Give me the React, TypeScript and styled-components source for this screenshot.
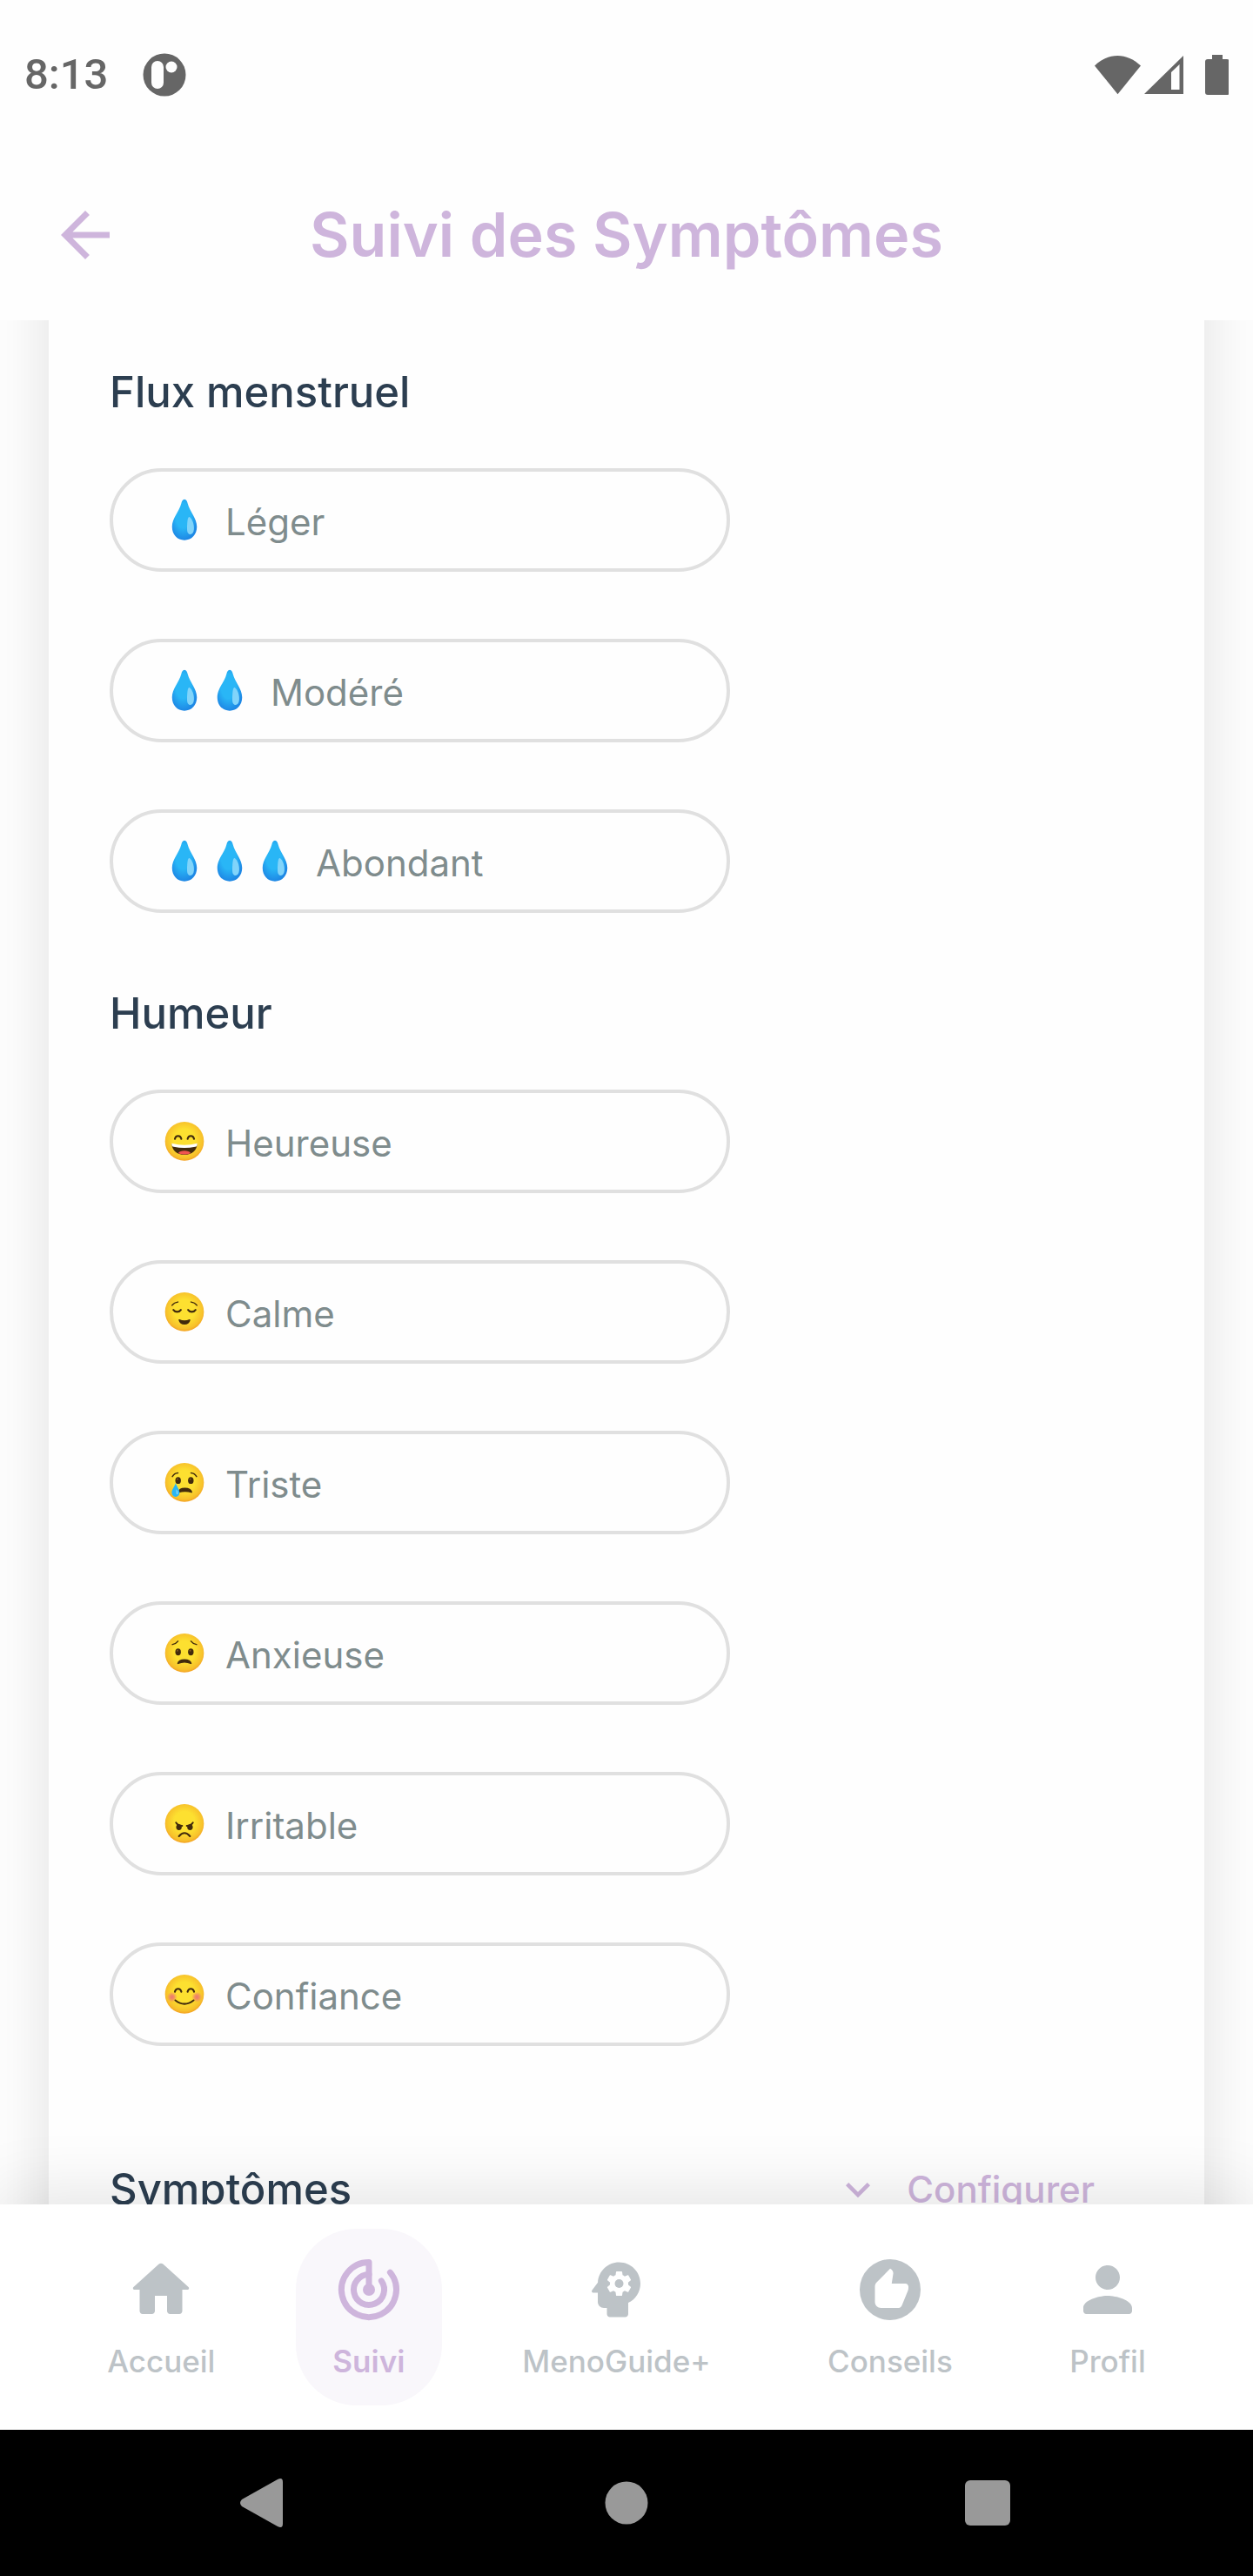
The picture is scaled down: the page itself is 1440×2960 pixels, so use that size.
import React from 'react';
import styled, { createGlobalStyle } from 'styled-components';

const color = {
  surface: '#fefefe',
  lilac: '#ceb5dc',
  ink: '#2c3e50',
  muted: '#7f8c8d',
  inactive: '#bdc3c7',
  outline: '#e0e0e0',
  status: '#666666',
};

const GlobalStyle = createGlobalStyle`
  *, *::before, *::after { box-sizing: border-box; }
  body { margin: 0; background: ${color.surface}; }
  button { font: inherit; color: inherit; background: none; border: 0; padding: 0; cursor: pointer; }
  h1, h2 { margin: 0; }
  svg { display: block; flex: none; }
`;

const Screen = styled.div`
  display: flex;
  flex-direction: column;
  height: 100vh;
  background: ${color.surface};
  font-family: Inter, Roboto, sans-serif;
  font-optical-sizing: none;
`;

const StatusBar = styled.div`
  display: flex;
  align-items: center;
  justify-content: space-between;
  height: 172px;
  padding: 0 28px;
  color: ${color.status};
`;

const StatusGroup = styled.div`
  display: flex;
  align-items: center;
  gap: 40px;
`;

const Clock = styled.time`
  font: 500 49px/58px Roboto, sans-serif;
`;

const Header = styled.header`
  display: grid;
  grid-template-columns: 84px 1fr 84px;
  align-items: center;
  height: 196px;
  padding: 0 56px;
  color: ${color.lilac};
`;

const Title = styled.h1`
  font-size: 70px;
  line-height: 84px;
  font-weight: 600;
  text-align: center;
`;

const Content = styled.main`
  flex: 1;
  min-height: 0;
  overflow: hidden;
`;

const Card = styled.div`
  margin: -140px 56px;
  padding: 190px 70px 140px;
  background: ${color.surface};
  box-shadow: 0 0 70px rgba(0, 0, 0, 0.12);
`;

const Section = styled.section<{ $before: number }>`
  margin-top: ${(p) => p.$before}px;
`;

const SectionHead = styled.div`
  display: flex;
  align-items: center;
  justify-content: space-between;
  margin-bottom: 54px;
`;

const SectionTitle = styled.h2`
  font-size: 49px;
  line-height: 66px;
  font-weight: 500;
  color: ${color.ink};
`;

const Options = styled.div`
  display: flex;
  flex-direction: column;
  gap: 77px;
`;

const Pill = styled.button`
  display: flex;
  align-items: center;
  width: 60%;
  height: 119px;
  padding: 4px 56px 0;
  border: 4px solid ${color.outline};
  border-radius: 60px;
  color: ${color.muted};
  font-size: 42px;
  line-height: 52px;
`;

const EmojiCell = styled.span`
  display: flex;
  justify-content: center;
  width: 52px;
`;

const PillLabel = styled.span`
  margin-left: 21px;
`;

const Configure = styled.button`
  display: flex;
  align-items: center;
  gap: 28px;
  padding: 0 56px;
  color: ${color.lilac};
  font-size: 42px;
  line-height: 52px;
  font-weight: 500;
`;

const TabBar = styled.nav`
  position: relative;
  display: flex;
  justify-content: space-around;
  padding: 28px 56px;
  background: #ffffff;
  box-shadow: 0 -14px 70px rgba(0, 0, 0, 0.1);
`;

const Tab = styled.a<{ $active: boolean }>`
  display: flex;
  flex-direction: column;
  align-items: center;
  gap: 18px;
  padding: 28px 42px;
  border-radius: 70px;
  background: ${(p) => (p.$active ? '#f9f7fb' : 'transparent')};
  color: ${(p) => (p.$active ? color.lilac : color.inactive)};
  font-size: 35px;
  line-height: 45px;
  font-weight: ${(p) => (p.$active ? 600 : 500)};
  text-decoration: none;
`;

const SystemBar = styled.div`
  position: relative;
  display: flex;
  align-items: center;
  justify-content: space-between;
  height: 168px;
  padding: 0 270px;
  background: #000000;
  color: #999999;
`;

const SharedDefs = styled.svg`
  position: absolute;
  width: 0;
  height: 0;
`;

type IconProps = { size: number; children: React.ReactNode };

function Icon({ size, children }: IconProps) {
  return (
    <svg width={size} height={size} viewBox="0 0 24 24" fill="currentColor" aria-hidden="true">
      {children}
    </svg>
  );
}

const brown = '#422b0d';

type Mood = 'happy' | 'calm' | 'sad' | 'anxious' | 'angry' | 'confident';

const roundEyes = (y: number) => (
  <g fill={brown}>
    <ellipse cx="44.5" cy={y} rx="8.5" ry="10.5" />
    <ellipse cx="83.5" cy={y} rx="8.5" ry="10.5" />
    <circle cx="42.5" cy={y - 4} r="2.4" fill="#896024" />
    <circle cx="81.5" cy={y - 4} r="2.4" fill="#896024" />
  </g>
);

const archedEyes = (
  <g fill="none" stroke={brown} strokeWidth="5.5" strokeLinecap="round">
    <path d="M34.5 57C37 44.5 52 44.5 54.5 57" />
    <path d="M73.5 57C76 44.5 91 44.5 93.5 57" />
  </g>
);

const features: Record<Mood, React.ReactNode> = {
  happy: (
    <>
      {archedEyes}
      <path d="M25 72q39 12 78 0c-1 20-16 33-39 33S26 92 25 72z" fill={brown} />
      <path d="M25 70q39 11 78 0v4c0 4-2 6-6 7q-33 7-66 0c-4-1-6-3-6-7z" fill="#ffffff" />
      <path d="M45 100c5-9 33-9 38 0-10 6-28 6-38 0z" fill="#ef5350" />
    </>
  ),
  calm: (
    <g fill="none" stroke={brown} strokeLinecap="round">
      <path d="M26 44Q33 35 44 34M102 44Q95 35 84 34" strokeWidth="4" />
      <path d="M30 58C35 66 48 66 53 58M75 58c5 8 18 8 23 0" strokeWidth="5.5" />
      <path d="M48 89q16 7 32 0c-4 16-28 16-32 0z" fill={brown} strokeWidth="4" strokeLinejoin="round" />
    </g>
  ),
  sad: (
    <>
      <path d="M27 46Q33 36 44 35M101 46Q95 36 84 35" fill="none" stroke={brown} strokeWidth="4" strokeLinecap="round" />
      {roundEyes(58)}
      <path d="M46 94c2-16 36-16 40 0q-20-6-40 0z" fill={brown} stroke={brown} strokeWidth="4" strokeLinejoin="round" />
      <path d="M37 66c5 13 12 20 12 29 0 8-5 13-12 13s-12-5-12-13c0-9 7-16 12-29z" fill="#29b6f6" />
      <path d="M38 85c4 3 7 7 6 14-1 3-5 2-5-2 0-5 0-8-1-12z" fill="#81d4fa" />
    </>
  ),
  anxious: (
    <>
      <path d="M27 38Q38 36 44 28M101 38Q90 36 84 28" fill="none" stroke={brown} strokeWidth="4" strokeLinecap="round" />
      {roundEyes(61)}
      <path d="M44 96c3-15 37-15 40 0q-20-9-40 0z" fill={brown} stroke={brown} strokeWidth="4" strokeLinejoin="round" />
    </>
  ),
  angry: (
    <>
      <ellipse cx="47" cy="75" rx="8.5" ry="9" fill={brown} />
      <ellipse cx="81" cy="75" rx="8.5" ry="9" fill={brown} />
      <path d="M38 61q5 9 19 10M90 61q-5 9-19 10" fill="none" stroke={brown} strokeWidth="5" strokeLinecap="round" />
      <path d="M47 103q17-20 34 0" fill="none" stroke={brown} strokeWidth="5.5" strokeLinecap="round" />
    </>
  ),
  confident: (
    <>
      <circle cx="26" cy="73" r="16" fill="url(#blush)" />
      <circle cx="102" cy="73" r="16" fill="url(#blush)" />
      {archedEyes}
      <path d="M36 83q28 22 56 0" fill="none" stroke={brown} strokeWidth="5.5" strokeLinecap="round" />
    </>
  ),
};

function Face({ mood }: { mood: Mood }) {
  return (
    <EmojiCell>
      <svg width="48" height="48" viewBox="0 7 128 128" overflow="visible" aria-hidden="true">
        <circle cx="64" cy="64" r="59.5" fill="url(#skin)" />
        {features[mood]}
      </svg>
    </EmojiCell>
  );
}

function Drop() {
  return (
    <EmojiCell>
      <svg width="48" height="48" viewBox="0 7 128 128" overflow="visible" aria-hidden="true">
        <path d="M64 1c6 0 8 6 10 13 6 24 28 45 28 71 0 24-16 41-38 41S26 109 26 85c0-26 22-47 28-71 2-7 4-13 10-13z" fill="url(#water)" />
        <path d="M79 55c9 6 15 22 14 38-1 10-5 15-11 15-7 0-10-7-10-16 0-15 1-40 7-37z" fill="#81d4fa" />
      </svg>
    </EmojiCell>
  );
}

function Gradients() {
  return (
    <SharedDefs aria-hidden="true">
      <defs>
        <radialGradient id="skin" cx="0.5" cy="0.46" r="0.54">
          <stop offset="0.5" stopColor="#fde030" />
          <stop offset="0.88" stopColor="#f7c02b" />
          <stop offset="1" stopColor="#f4a223" />
        </radialGradient>
        <radialGradient id="blush">
          <stop offset="0" stopColor="#ed7770" />
          <stop offset="0.4" stopColor="#ed7770" stopOpacity="0.75" />
          <stop offset="1" stopColor="#ed7770" stopOpacity="0" />
        </radialGradient>
        <radialGradient id="water" cx="0.45" cy="0.4" r="0.6">
          <stop offset="0.5" stopColor="#29b6f6" />
          <stop offset="1" stopColor="#1e88e5" />
        </radialGradient>
      </defs>
    </SharedDefs>
  );
}

const flows = [
  { label: 'Léger', drops: 1 },
  { label: 'Modéré', drops: 2 },
  { label: 'Abondant', drops: 3 },
];

const moods: { label: string; mood: Mood }[] = [
  { label: 'Heureuse', mood: 'happy' },
  { label: 'Calme', mood: 'calm' },
  { label: 'Triste', mood: 'sad' },
  { label: 'Anxieuse', mood: 'anxious' },
  { label: 'Irritable', mood: 'angry' },
  { label: 'Confiance', mood: 'confident' },
];

const tabs = [
  {
    label: 'Accueil',
    icon: <path d="M10 19v-5h4v5c0 .55.45 1 1 1h3c.55 0 1-.45 1-1v-7h1.7c.46 0 .68-.57.33-.87L12.67 3.6c-.38-.34-.96-.34-1.34 0l-8.36 7.53c-.34.3-.13.87.33.87H5v7c0 .55.45 1 1 1h3c.55 0 1-.45 1-1z" />,
  },
  {
    label: 'Suivi',
    icon: (
      <>
        <g fill="none" stroke="currentColor" strokeWidth="2" strokeLinecap="round" strokeLinejoin="round">
          <path d="M18.97 6.33A9 9 0 1 1 12 3V12" />
          <path d="M16.1 9.13A5 5 0 1 1 12 7" />
        </g>
        <circle cx="12" cy="12" r="2" />
      </>
    ),
  },
  {
    label: 'MenoGuide+',
    icon: (
      <>
        <circle cx="13" cy="10" r="1.43" />
        <path d="M13 3C9.25 3 6.2 5.94 6.02 9.64L4.1 12.2c-.25.33-.01.8.4.8H6v3c0 1.1.9 2 2 2h1v2c0 .55.45 1 1 1h5c.55 0 1-.45 1-1v-3.68c2.36-1.12 4-3.53 4-6.32 0-3.87-3.13-7-7-7zm3 7c0 .13-.01.26-.02.39l.83.66c.08.06.1.16.05.25l-.8 1.39c-.05.09-.16.12-.24.09l-.99-.4c-.21.16-.43.29-.67.39L14 13.83c-.01.1-.1.17-.2.17h-1.6c-.1 0-.18-.07-.2-.17l-.15-1.06c-.25-.1-.47-.23-.68-.39l-.99.4c-.09.03-.2 0-.25-.09l-.8-1.39c-.05-.08-.03-.19.05-.25l.84-.66c-.01-.13-.02-.26-.02-.39s.02-.27.04-.39l-.85-.66c-.08-.06-.1-.16-.05-.26l.8-1.38c.05-.09.15-.12.24-.09l1 .4c.2-.15.43-.29.67-.39L12 6.17c.02-.1.1-.17.2-.17h1.6c.1 0 .18.07.2.17l.15 1.06c.24.1.46.23.67.39l1-.4c.09-.03.2 0 .24.09l.8 1.38c.05.09.03.2-.05.26l-.85.66c.03.12.04.25.04.39z" />
      </>
    ),
  },
  {
    label: 'Conseils',
    icon: (
      <path
        fillRule="evenodd"
        d="M12 2a10 10 0 1 0 0 20a10 10 0 1 0 0-20zM12 5.1c.7.4 1.1 1 1 1.7L12.5 10H17c.55 0 1 .45 1 1 0 .5 0 .9-.15 1.3l-1.95 4.8c-.2.55-.6.9-1.1.9H9c-1.1 0-2-.9-2-2v-5c0-.5.15-.9.45-1.3z"
      />
    ),
  },
  {
    label: 'Profil',
    icon: <path d="M12 12c2.21 0 4-1.79 4-4s-1.79-4-4-4-4 1.79-4 4 1.79 4 4 4zm0 2c-2.67 0-8 1.34-8 4v1c0 .55.45 1 1 1h14c.55 0 1-.45 1-1v-1c0-2.66-5.33-4-8-4z" />,
  },
];

export default function App() {
  return (
    <Screen>
      <GlobalStyle />
      <Gradients />
      <StatusBar>
        <StatusGroup>
          <Clock>8:13</Clock>
          <svg width="50" height="50" viewBox="0 0 50 50" aria-hidden="true">
            <circle cx="25" cy="25" r="24.5" fill="currentColor" />
            <rect x="10" y="9" width="14" height="32" rx="7" fill={color.surface} />
            <circle cx="33" cy="16" r="6.5" fill={color.surface} />
          </svg>
        </StatusGroup>
        <svg width="154" height="48" viewBox="0 0 154 48" fill="currentColor" aria-hidden="true">
          <path d="M0 17C16-4 37-4 53 17L26.500 61z" transform="translate(0 1) scale(1 .74)" />
          <path fillRule="evenodd" d="M57 46L102 2V46zM88 21V41H97.5V12z" />
          <path d="M135 1h12v5h5q3 0 3 3v35q0 3-3 3h-22q-3 0-3-3V9q0-3 3-3h5z" />
        </svg>
      </StatusBar>
      <Header>
        <button type="button" aria-label="Retour">
          <Icon size={84}>
            <path d="M20 11H7.83l5.59-5.59L12 4l-8 8 8 8 1.41-1.41L7.83 13H20v-2z" />
          </Icon>
        </button>
        <Title>Suivi des Symptômes</Title>
      </Header>
      <Content>
        <Card>
          <Section $before={0}>
            <SectionHead>
              <SectionTitle>Flux menstruel</SectionTitle>
            </SectionHead>
            <Options>
              {flows.map(({ label, drops }) => (
                <Pill key={label} type="button">
                  {Array.from({ length: drops }, (_, i) => (
                    <Drop key={i} />
                  ))}
                  <PillLabel>{label}</PillLabel>
                </Pill>
              ))}
            </Options>
          </Section>
          <Section $before={83}>
            <SectionHead>
              <SectionTitle>Humeur</SectionTitle>
            </SectionHead>
            <Options>
              {moods.map(({ label, mood }) => (
                <Pill key={label} type="button">
                  <Face mood={mood} />
                  <PillLabel>{label}</PillLabel>
                </Pill>
              ))}
            </Options>
          </Section>
          <Section $before={132}>
            <SectionHead>
              <SectionTitle>Symptômes</SectionTitle>
              <Configure type="button">
                <Icon size={56}>
                  <path d="M16.59 8.59L12 13.17 7.41 8.59 6 10l6 6 6-6z" />
                </Icon>
                Configurer
              </Configure>
            </SectionHead>
          </Section>
        </Card>
      </Content>
      <TabBar>
        {tabs.map(({ label, icon }) => (
          <Tab key={label} href={`#${label}`} $active={label === 'Suivi'}>
            <Icon size={84}>{icon}</Icon>
            {label}
          </Tab>
        ))}
      </TabBar>
      <SystemBar>
        <button type="button" aria-label="Précédent">
          <svg width="70" height="70" viewBox="0 0 70 70" fill="currentColor" aria-hidden="true">
            <path d="M8 31L49 8Q55 5 55 11V59Q55 65 49 62L8 39Q4 35 8 31z" />
          </svg>
        </button>
        <button type="button" aria-label="Accueil du téléphone">
          <svg width="70" height="70" viewBox="0 0 70 70" fill="currentColor" aria-hidden="true">
            <circle cx="35" cy="35" r="24.5" />
          </svg>
        </button>
        <button type="button" aria-label="Applications récentes">
          <svg width="70" height="70" viewBox="0 0 70 70" fill="currentColor" aria-hidden="true">
            <rect x="9" y="9" width="52" height="52" rx="6" />
          </svg>
        </button>
      </SystemBar>
    </Screen>
  );
}
